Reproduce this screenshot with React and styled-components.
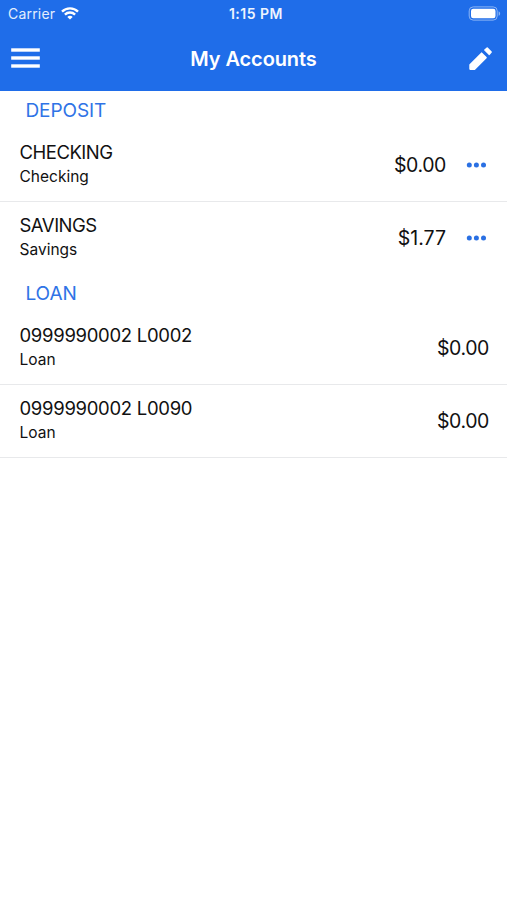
import React from "react";
import styled, { createGlobalStyle } from "styled-components";

const GlobalStyle = createGlobalStyle`
  * {
    box-sizing: border-box;
  }
  body {
    margin: 0;
    background: #fff;
    font-family: Inter, "Liberation Sans", sans-serif;
    color: #111;
  }
`;

const Screen = styled.div`
  min-height: 900px;
  background: #fff;
`;

const Header = styled.header`
  height: 91px;
  background: #1f6de9;
  color: #fff;
`;

const StatusBar = styled.div`
  display: grid;
  grid-template-columns: 1fr auto 1fr;
  align-items: center;
  height: 27px;
  padding: 0 6px 0 8px;
`;

const Carrier = styled.div`
  display: flex;
  align-items: center;
  gap: 6px;
  font-size: 14px;
  letter-spacing: 0.2px;
  color: #e3edfd;
`;

const Time = styled.div`
  padding-left: 3px;
  font-size: 14px;
  font-weight: 600;
  letter-spacing: 0.5px;
  color: #eef4fe;
`;

const Battery = styled.svg`
  justify-self: end;
`;

const NavBar = styled.div`
  display: grid;
  grid-template-columns: 1fr auto 1fr;
  align-items: center;
  height: 64px;
  padding: 0 11px;
`;

const Title = styled.h1`
  margin: 0;
  font-size: 20px;
  font-weight: 600;
  letter-spacing: -0.1px;
`;

const IconButton = styled.button`
  display: flex;
  justify-self: ${(props) => props.$side || "start"};
  padding: 0;
  margin-right: ${(props) => (props.$side === "end" ? "3px" : "0")};
  border: none;
  background: none;
  color: inherit;
`;

const GroupTitle = styled.h2`
  margin: 0;
  height: 37px;
  padding: 2px 0 0 25.5px;
  font-size: 19px;
  font-weight: 400;
  line-height: 36px;
  letter-spacing: -0.1px;
  color: #2f73e6;
`;

const Row = styled.div`
  display: flex;
  align-items: center;
  height: 73px;
  padding: 0 18px 0 19.5px;
  box-shadow: ${(props) => (props.$noDivider ? "none" : "0 1px 0 #e8e9eb")};
`;

const Info = styled.div`
  flex: 1;
  padding-bottom: 2px;
`;

const Name = styled.div`
  font-size: 18.5px;
  line-height: 25px;
  letter-spacing: ${(props) => props.$tracking};
`;

const Kind = styled.div`
  padding-top: 1px;
  font-size: 15.5px;
  line-height: 21px;
`;

const Amount = styled.div`
  font-size: 19.5px;
  line-height: 24px;
  letter-spacing: ${(props) => props.$tracking || "-0.4px"};
`;

const More = styled.button`
  display: flex;
  margin-left: 20px;
  padding: 0 2px 0 0;
  border: none;
  background: none;
  color: #2a70e3;
`;

const groups = [
  {
    title: "DEPOSIT",
    nameTracking: "-0.5px",
    accounts: [
      { name: "CHECKING", kind: "Checking", amount: "$0.00", more: true },
      { name: "SAVINGS", kind: "Savings", amount: "$1.77", amountTracking: "0", more: true, noDivider: true },
    ],
  },
  {
    title: "LOAN",
    nameTracking: "-0.3px",
    accounts: [
      { name: "0999990002 L0002", kind: "Loan", amount: "$0.00" },
      { name: "0999990002 L0090", kind: "Loan", amount: "$0.00" },
    ],
  },
];

const WifiIcon = () => (
  <svg width="18" height="13" viewBox="0 0 18 13" fill="none" stroke="#fff" strokeWidth="2.4">
    <path d="M1 4.6C5.4 0.3 12.6 0.3 17 4.6" />
    <path d="M3.9 7.6C6.8 4.8 11.2 4.8 14.1 7.6" />
    <path d="M9 12.6L6.3 9.9C7.8 8.5 10.2 8.5 11.7 9.9Z" fill="#fff" stroke="none" />
  </svg>
);

const MenuIcon = () => (
  <svg width="29" height="22" viewBox="0 0 29 22" fill="currentColor">
    <rect x="0.2" y="0.3" width="28.6" height="3.4" />
    <rect x="0.2" y="8.3" width="28.6" height="3.4" />
    <rect x="0.2" y="16.3" width="28.6" height="3.4" />
  </svg>
);

const EditIcon = () => (
  <svg
    width="24"
    height="24"
    viewBox="0.4 0.4 24 24"
    fill="currentColor"
    stroke="currentColor"
    strokeWidth="1.6"
    strokeLinejoin="round"
  >
    <path d="M1.5 18.1L13 6.6L17.4 11L5.9 22.5H1.5Z" />
    <path d="M16.3 3.4L18.6 1.5L22.5 5.4L20.6 7.7Z" />
  </svg>
);

const MoreIcon = () => (
  <svg width="21" height="6" viewBox="0 0 21 6" fill="currentColor">
    <circle cx="3.3" cy="3" r="2.5" />
    <circle cx="10.4" cy="3" r="2.5" />
    <circle cx="17.5" cy="3" r="2.5" />
  </svg>
);

const AccountRow = ({ account, nameTracking }) => (
  <Row $noDivider={account.noDivider}>
    <Info>
      <Name $tracking={nameTracking}>{account.name}</Name>
      <Kind>{account.kind}</Kind>
    </Info>
    <Amount $tracking={account.amountTracking}>{account.amount}</Amount>
    {account.more && (
      <More aria-label="More">
        <MoreIcon />
      </More>
    )}
  </Row>
);

const App = () => {
  return (
    <Screen>
      <GlobalStyle />
      <Header>
        <StatusBar>
          <Carrier>
            Carrier
            <WifiIcon />
          </Carrier>
          <Time>1:15 PM</Time>
          <Battery width="33" height="15" viewBox="0 0 33 15">
            <rect x="1.2" y="0.9" width="28" height="13.2" rx="4" fill="none" stroke="#8db5f5" strokeWidth="1" />
            <rect x="3" y="2.8" width="24.5" height="9.4" rx="2.2" fill="#fff" />
            <path d="M30.6 5.2C32.6 6 32.6 9 30.6 9.8Z" fill="#8db5f5" />
          </Battery>
        </StatusBar>
        <NavBar>
          <IconButton aria-label="Menu">
            <MenuIcon />
          </IconButton>
          <Title>My Accounts</Title>
          <IconButton $side="end" aria-label="Edit">
            <EditIcon />
          </IconButton>
        </NavBar>
      </Header>
      {groups.map((group) => (
        <section key={group.title}>
          <GroupTitle>{group.title}</GroupTitle>
          {group.accounts.map((account) => (
            <AccountRow key={account.name} account={account} nameTracking={group.nameTracking} />
          ))}
        </section>
      ))}
    </Screen>
  );
};

export default App;
